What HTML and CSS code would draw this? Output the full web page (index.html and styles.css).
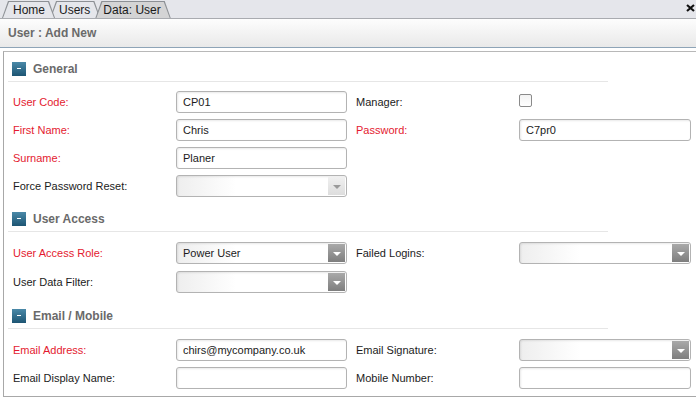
FILE: index.html
```html
<!DOCTYPE html>
<html lang="en">
<head>
    <meta charset="UTF-8">
    <title>Data: User</title>
    <link rel="stylesheet" href="styles.css">
</head>
<body>
    <div class="tabbar">
        <div class="tabs">
            <div class="tab tab-home"><span>Home</span></div>
            <div class="tab tab-users"><span>Users</span></div>
            <div class="tab active"><span>Data: User</span></div>
        </div>
        <svg class="close" width="9" height="8" viewBox="0 0 9 8">
            <path d="M1 1 L8 7 M8 1 L1 7" stroke="#111" stroke-width="2.2" fill="none"/>
        </svg>
    </div>

    <div class="titlebar">User : Add New</div>

    <div class="panel">
        <!-- General -->
        <section class="group group-general">
            <div class="group-head"><span class="toggle"></span>General</div>
            <div class="fields">
                <label class="req">User Code:</label>
                <div class="input">CP01</div>
                <label class="rlabel">Manager:</label>
                <div><span class="checkbox"></span></div>

                <label class="req">First Name:</label>
                <div class="input">Chris</div>
                <label class="rlabel req">Password:</label>
                <div class="input">C7pr0</div>

                <label class="req">Surname:</label>
                <div class="input">Planer</div>
                <span></span><span></span>

                <label>Force Password Reset:</label>
                <div class="input select disabled"><span class="arrow"></span></div>
            </div>
        </section>

        <!-- User Access -->
        <section class="group group-access">
            <div class="group-head"><span class="toggle"></span>User Access</div>
            <div class="fields">
                <label class="req">User Access Role:</label>
                <div class="input select">Power User<span class="arrow"></span></div>
                <label class="rlabel">Failed Logins:</label>
                <div class="input select"><span class="arrow"></span></div>

                <label>User Data Filter:</label>
                <div class="input select"><span class="arrow"></span></div>
            </div>
        </section>

        <!-- Email / Mobile -->
        <section class="group">
            <div class="group-head"><span class="toggle"></span>Email / Mobile</div>
            <div class="fields">
                <label class="req">Email Address:</label>
                <div class="input">chirs@mycompany.co.uk</div>
                <label class="rlabel">Email Signature:</label>
                <div class="input select"><span class="arrow"></span></div>

                <label>Email Display Name:</label>
                <div class="input"></div>
                <label class="rlabel">Mobile Number:</label>
                <div class="input"></div>
            </div>
        </section>
    </div>
</body>
</html>
```

FILE: styles.css
```css
body {
    margin: 0;
    font-family: 'Liberation Sans', Arial, sans-serif;
    font-size: 11px;
    color: #1b1b1b;
    background: #ffffff;
    overflow: hidden;
}

/* Tab strip */
.tabbar {
    height: 18px;
    background: #e5e6eb;
    border-bottom: 1px solid #a9abb0;
    display: flex;
    justify-content: space-between;
    align-items: flex-start;
}

.tabs {
    display: flex;
    padding-left: 2px;
    padding-top: 1px;
}

.tab {
    position: relative;
    height: 17px;
    line-height: 18px;
    padding: 0 10px 0 11px;
    margin-right: -5px;
    font-size: 12px;
    color: #1b1b1b;
}

.tab span {
    position: relative;
    z-index: 2;
}

.tab::before,
.tab::after {
    content: "";
    position: absolute;
    clip-path: polygon(6px 0, calc(100% - 6px) 0, 100% 100%, 0 100%);
}

.tab::before {
    inset: 0;
    background: #8d9095;
}

.tab::after {
    inset: 1px 1px 0 1px;
    background: #e5e6eb;
}

.tab-home {
    z-index: 3;
}

.tab-users {
    z-index: 2;
    padding-left: 9px;
}

.tab.active {
    z-index: 4;
    padding-left: 8px;
}

.tab.active::after {
    background: #d4d4d5;
}

.close {
    margin: 4px 1px 0 0;
}

/* Title bar */
.titlebar {
    height: 28px;
    line-height: 28px;
    padding-left: 8px;
    font-size: 12px;
    font-weight: bold;
    color: #6a6a6a;
    background: linear-gradient(#fdfdfd, #e9e9e9);
    border-bottom: 1px solid #8ea4b7;
}

/* Form panel */
.panel {
    margin: 3px 0 0 3px;
    border-top: 1px solid #b8b8b8;
    border-left: 1px solid #a8a8a8;
    border-bottom: 1px solid #a8a8a8;
    padding-top: 10px;
    height: 334px;
    overflow: hidden;
}

.group {
    margin-bottom: 15px;
}

.group-head {
    display: flex;
    align-items: flex-start;
    gap: 7px;
    width: 596px;
    height: 19px;
    margin-left: 4px;
    padding-left: 4px;
    border-bottom: 1px solid #e6e6e6;
    font-size: 12px;
    font-weight: bold;
    color: #6a6a6a;
    line-height: 15px;
}

.toggle {
    position: relative;
    width: 14px;
    height: 14px;
    background: linear-gradient(#4a89a8, #1d5573);
}

.toggle::after {
    content: "";
    position: absolute;
    left: 5px;
    top: 6px;
    width: 4px;
    height: 1px;
    background: #ffffff;
}

.fields {
    display: grid;
    grid-template-columns: 163px 171px 172px 172px;
    grid-auto-rows: 22px;
    row-gap: 6px;
    align-items: center;
    padding: 10px 0 0 9px;
}

.group-general .fields {
    padding-top: 9px;
}

.group-access {
    margin-bottom: 16px;
}

.group-access .fields {
    row-gap: 7px;
}

label {
    color: #1b1b1b;
}

.req {
    color: #e41a30;
}

.rlabel {
    padding-left: 9px;
}

.input {
    position: relative;
    box-sizing: border-box;
    height: 22px;
    line-height: 20px;
    padding-left: 6px;
    border: 1px solid #b3b3b3;
    border-radius: 3px;
    background: #ffffff;
    box-shadow: inset 1px 1px 2px rgba(0, 0, 0, 0.09);
    font-size: 11px;
    color: #1b1b1b;
}

.select {
    background: linear-gradient(to right, #eeeeee, #ffffff 35%);
}

.arrow {
    position: absolute;
    top: 1px;
    right: 1px;
    bottom: 1px;
    width: 17px;
    background: linear-gradient(#a9a9a9, #7e7e7e);
}

.arrow::after {
    content: "";
    position: absolute;
    left: 5px;
    top: 8px;
    border-left: 4px solid transparent;
    border-right: 4px solid transparent;
    border-top: 4px solid #ffffff;
}

.disabled .arrow {
    background: linear-gradient(#f0f0f0, #dddddd);
}

.disabled .arrow::after {
    border-top-color: #9a9a9a;
}

.checkbox {
    display: block;
    box-sizing: border-box;
    width: 13px;
    height: 13px;
    margin-bottom: 3px;
    border: 1px solid #8a8a8a;
    border-radius: 2px;
    background: linear-gradient(#f3f3f3, #ffffff);
}
```
